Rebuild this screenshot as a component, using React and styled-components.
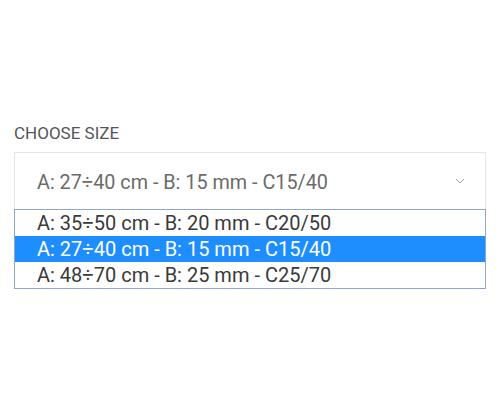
import React from "react";
import styled, { createGlobalStyle } from "styled-components";

const Global = createGlobalStyle`
  html, body { margin: 0; padding: 0; background: #fff; }
  body { font-family: Roboto, "Liberation Sans", sans-serif; }
`;

const Page = styled.div`
  width: 500px;
  height: 420px;
  box-sizing: border-box;
  padding: 122px 14px 0 14px;
  display: flex;
  flex-direction: column;
`;

const Label = styled.div`
  font-size: 17px;
  line-height: 22px;
  color: #555;
  text-transform: uppercase;
  margin-bottom: 8px;
`;

const SelectBox = styled.div`
  width: 472px;
  height: 57px;
  box-sizing: border-box;
  border: 1px solid #e4e4e4;
  border-bottom: none;
  display: flex;
  align-items: center;
  justify-content: space-between;
  padding: 0 20px 0 22px;
  font-size: 19.8px;
  color: #6b6b6b;
`;

const Value = styled.span`
  padding-top: 2px;
`;

const List = styled.ul`
  list-style: none;
  margin: 0;
  padding: 0;
  width: 472px;
  box-sizing: border-box;
  border: 1px solid #8fa6cc;
`;

const Option = styled.li`
  height: 26px;
  line-height: 26px;
  padding-left: 22px;
  font-size: 20px;
  color: ${(p) => (p.$selected ? "#fff" : "#3a3a3a")};
  background: ${(p) => (p.$selected ? "#1e8eff" : "#fff")};
`;

const Chevron = () => (
  <svg width="10" height="6" viewBox="0 0 10 6" fill="none">
    <path d="M1 1 L5 5 L9 1" stroke="#a0a0a0" strokeWidth="1" />
  </svg>
);

const options = [
  "A: 35÷50 cm - B: 20 mm - C20/50",
  "A: 27÷40 cm - B: 15 mm - C15/40",
  "A: 48÷70 cm - B: 25 mm - C25/70",
];

export default function App() {
  const selected = 1;
  return (
    <>
      <Global />
      <Page>
        <Label>Choose size</Label>
        <SelectBox>
          <Value>{options[selected]}</Value>
          <Chevron />
        </SelectBox>
        <List>
          {options.map((o, i) => (
            <Option key={o} $selected={i === selected}>
              {o}
            </Option>
          ))}
        </List>
      </Page>
    </>
  );
}
